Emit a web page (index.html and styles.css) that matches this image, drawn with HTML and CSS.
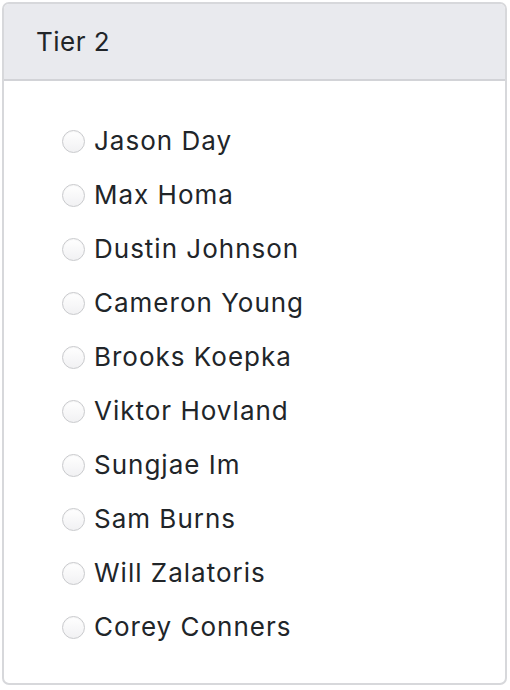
FILE: index.html
```html
<!DOCTYPE html>
<html>
<head>
<meta charset="utf-8">
<link rel="stylesheet" href="styles.css">
</head>
<body>
<div class="card">
  <div class="card-header">Tier 2</div>
  <div class="card-body">
    <label class="option"><span class="radio"></span><span class="name">Jason Day</span></label>
    <label class="option"><span class="radio"></span><span class="name">Max Homa</span></label>
    <label class="option"><span class="radio"></span><span class="name">Dustin Johnson</span></label>
    <label class="option"><span class="radio"></span><span class="name">Cameron Young</span></label>
    <label class="option"><span class="radio"></span><span class="name">Brooks Koepka</span></label>
    <label class="option"><span class="radio"></span><span class="name">Viktor Hovland</span></label>
    <label class="option"><span class="radio"></span><span class="name">Sungjae Im</span></label>
    <label class="option"><span class="radio"></span><span class="name">Sam Burns</span></label>
    <label class="option"><span class="radio"></span><span class="name">Will Zalatoris</span></label>
    <label class="option"><span class="radio"></span><span class="name">Corey Conners</span></label>
  </div>
</div>
</body>
</html>
```
FILE: styles.css
```css
html, body {
  margin: 0;
  padding: 0;
  background: #ffffff;
}
body {
  font-family: Inter, "Noto Sans", sans-serif;
  color: #212529;
  padding: 2px 2px 0 2px;
}
.card {
  width: 505px;
  height: 683px;
  box-sizing: border-box;
  border: 2px solid #d7d8db;
  border-radius: 7px;
  overflow: hidden;
  background: #fff;
}
.card-header {
  height: 77px;
  box-sizing: border-box;
  background: #e9eaee;
  border-bottom: 2px solid #d2d3d7;
  font-size: 26px;
  letter-spacing: 0.5px;
  padding-left: 32px;
  display: flex;
  align-items: center;
  padding-bottom: 0;
}
.card-body {
  padding: 32px 0 0 58px;
  display: flex;
  flex-direction: column;
}
.option {
  height: 54px;
  display: flex;
  align-items: center;
  gap: 9px;
  font-size: 26px;
  letter-spacing: 1px;
}
.radio {
  width: 23px;
  height: 23px;
  box-sizing: border-box;
  border-radius: 50%;
  border: 1px solid #c9cacd;
  background: linear-gradient(#ffffff, #f1f1f3);
  box-shadow: inset 0 1px 1px rgba(0,0,0,0.04);
  flex: none;
  margin-top: 2px;
}
```
